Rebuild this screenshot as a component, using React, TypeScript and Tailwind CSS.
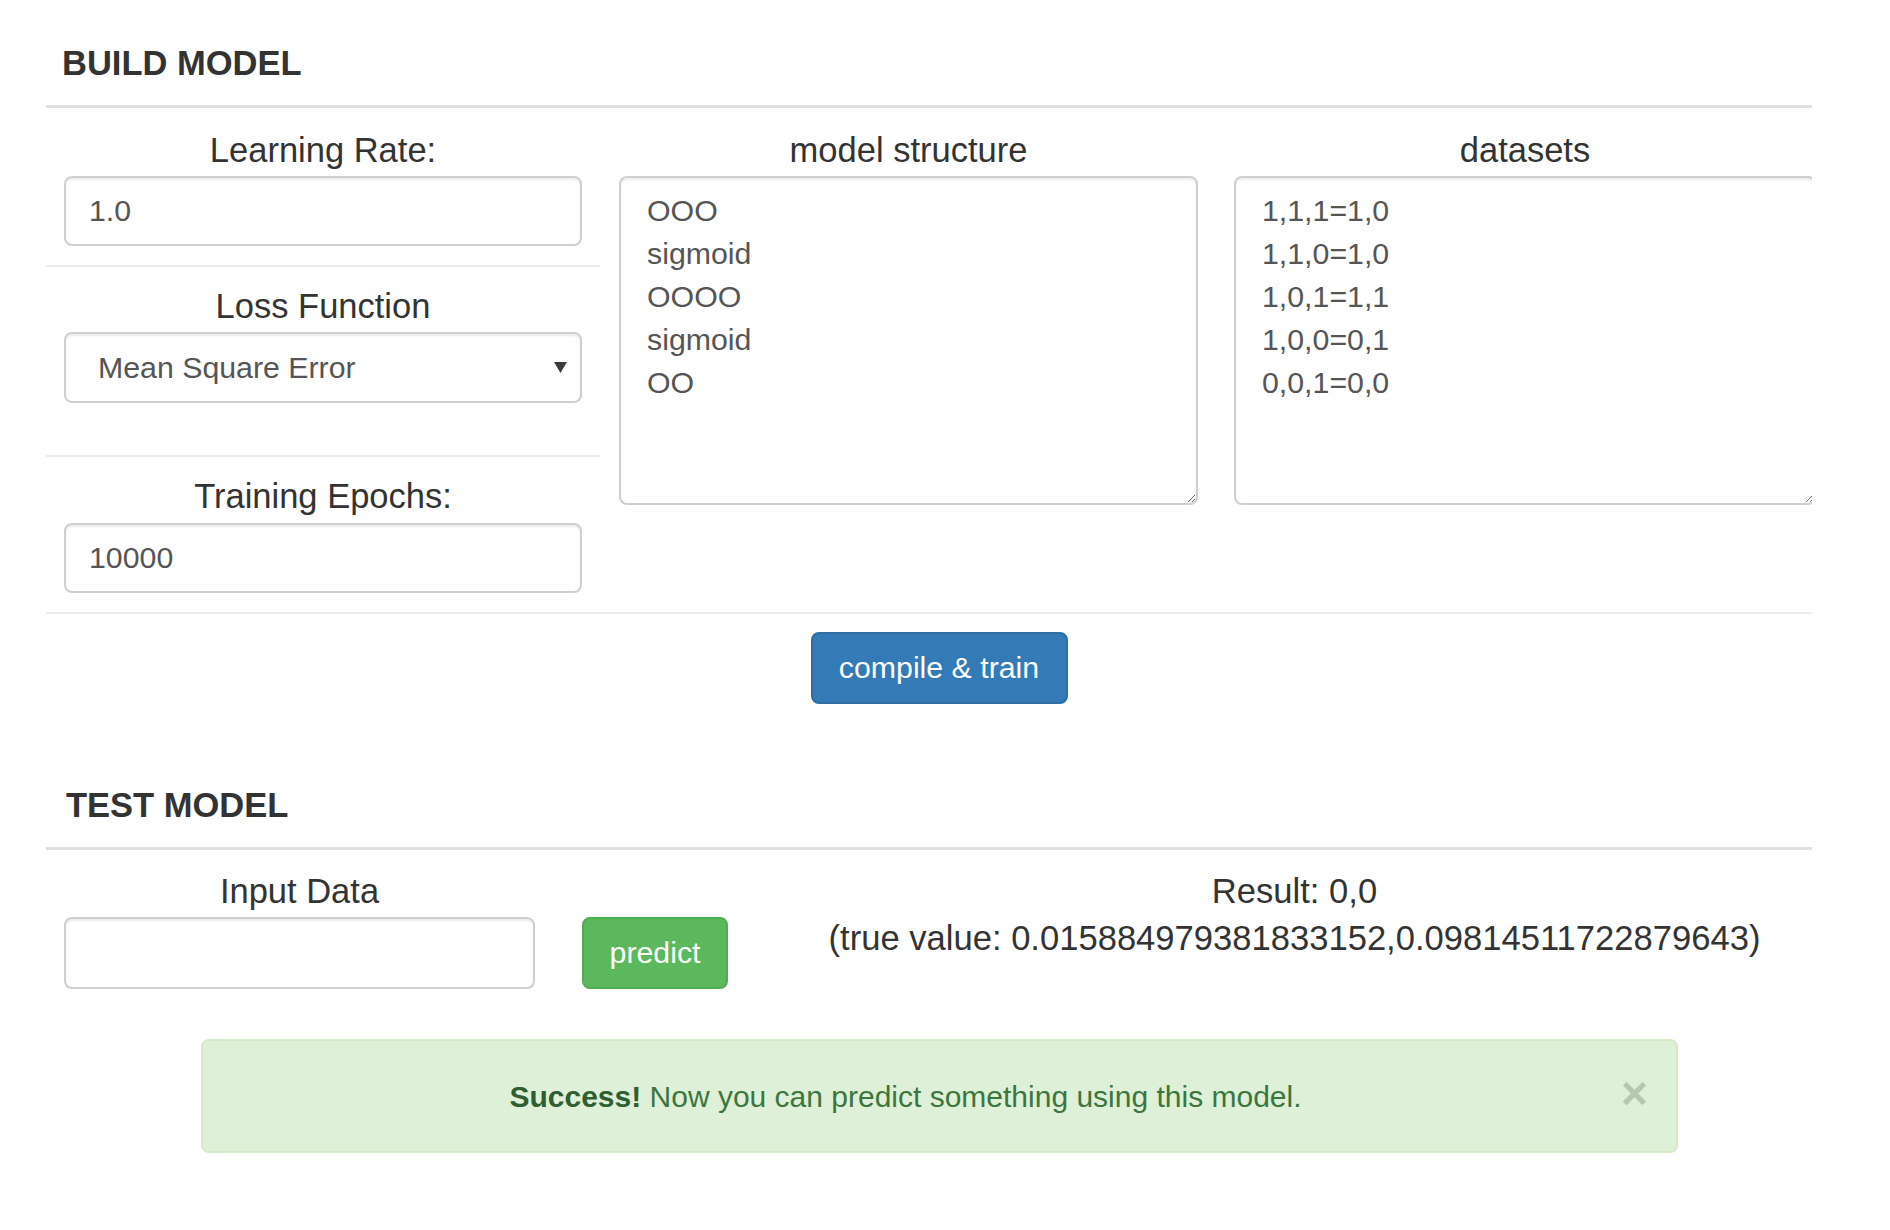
import React from "react";

function Label({ children }: { children: React.ReactNode }) {
  return (
    <div className="text-center text-[34.5px] leading-[38px] text-[#333]">{children}</div>
  );
}

const inputCls =
  "block w-full rounded-[8px] border-2 border-[#cfcfcf] bg-white pl-[23px] text-[30.3px] text-[#555] shadow-[inset_0_2px_2px_rgba(0,0,0,0.075)] outline-none font-['Liberation_Sans',Arial,sans-serif]";

const areaCls =
  "block w-full h-[329px] rounded-[8px] border-2 border-[#cfcfcf] bg-white pl-[26px] pr-[10px] pt-[11px] text-[30.3px] leading-[43px] text-[#555] shadow-[inset_0_2px_2px_rgba(0,0,0,0.075)] outline-none font-['Liberation_Sans',Arial,sans-serif]";

export default function App() {
  return (
    <div className="w-[1812px] min-h-[1230px] overflow-hidden bg-white font-['Liberation_Sans',Arial,sans-serif] text-[#333]">
      <div className="ml-[46px] w-[1786px]">
        {/* BUILD MODEL */}
        <h2 className="pt-[44px] pl-[16px] text-[34.5px] leading-[38px] font-bold text-[#333]">
          BUILD MODEL
        </h2>
        <div className="mt-[23px] h-[3px] bg-[#e0e0e0]" />

        <div className="flex">
          {/* left column */}
          <div className="w-[554px] shrink-0">
            <div className="px-[18px] pt-[23px]">
              <Label>Learning Rate:</Label>
              <input readOnly defaultValue="1.0" className={inputCls + " mt-[7px] h-[70px]"} />
            </div>
            <div className="mt-[19px] h-[2px] bg-[#ececec]" />
            <div className="px-[18px] pt-[20px]">
              <Label>Loss Function</Label>
              <div className="mt-[7px] flex h-[71px] items-center justify-between rounded-[8px] border-2 border-[#cfcfcf] bg-white pl-[32px] pr-[13px] shadow-[inset_0_2px_2px_rgba(0,0,0,0.075)]">
                <span className="text-[30.3px] text-[#555]">Mean Square Error</span>
                <svg width="13" height="11" viewBox="0 0 13 11">
                  <polygon points="0,0 13,0 6.5,11" fill="#3a3a3a" />
                </svg>
              </div>
            </div>
            <div className="mt-[52px] h-[2px] bg-[#ececec]" />
            <div className="px-[18px] pt-[20px]">
              <Label>Training Epochs:</Label>
              <input readOnly defaultValue="10000" className={inputCls + " mt-[8px] h-[70px]"} />
            </div>
          </div>

          {/* middle column */}
          <div className="w-[616px] shrink-0 pl-[19px] pr-[18px] pt-[23px]">
            <Label>model structure</Label>
            <textarea
              readOnly
              defaultValue={"OOO\nsigmoid\nOOOO\nsigmoid\nOO"}
              className={areaCls + " mt-[7px]"}
            />
          </div>

          {/* right column (cropped at the page edge) */}
          <div className="w-[616px] shrink-0 pl-[18px] pr-[16px] pt-[23px]">
            <Label>datasets</Label>
            <textarea
              readOnly
              defaultValue={"1,1,1=1,0\n1,1,0=1,0\n1,0,1=1,1\n1,0,0=0,1\n0,0,1=0,0"}
              className={areaCls + " mt-[7px]"}
            />
          </div>
        </div>

        <div className="mt-[19px] h-[2px] bg-[#ececec]" />

        <div className="mt-[18px] flex justify-center">
          <button className="h-[72px] w-[257px] rounded-[8px] border-2 border-[#2e6da4] bg-[#337ab7] text-[30.3px] text-white">
            compile &amp; train
          </button>
        </div>

        {/* TEST MODEL */}
        <h2 className="mt-[82px] pl-[20px] text-[34.5px] leading-[38px] font-bold text-[#333]">
          TEST MODEL
        </h2>
        <div className="mt-[23px] h-[3px] bg-[#e0e0e0]" />

        <div className="flex">
          <div className="w-[507px] shrink-0 px-[18px] pt-[22px]">
            <Label>Input Data</Label>
            <input readOnly defaultValue="" className={inputCls + " mt-[7px] h-[72px]"} />
          </div>
          <div className="w-[204px] shrink-0 pl-[29px] pt-[67px]">
            <button className="h-[72px] w-[146px] rounded-[8px] border-2 border-[#4cae4c] bg-[#5cb85c] text-[30.3px] text-white">
              predict
            </button>
          </div>
          <div className="flex-1 pt-[18px] text-center text-[34.6px] leading-[47px] text-[#333]">
            <div>Result: 0,0</div>
            <div>(true value: 0.015884979381833152,0.09814511722879643)</div>
          </div>
        </div>

        <div className="mx-auto mt-[50px] flex h-[114px] w-[1477px] items-center rounded-[8px] border-2 border-[#d6e9c6] bg-[#dff0d8] pl-[30px] pr-[30px]">
          <div className="mr-[45px] flex-1 text-center text-[30px] text-[#3c763d]">
            <strong className="font-bold text-[#2f5e30]">Success!</strong> Now you can predict something using this model.
          </div>
          <span className="-mt-[6px] flex w-[22px] justify-center text-[46px] font-bold leading-none text-[#b5c7ae]">
            ×
          </span>
        </div>
      </div>
    </div>
  );
}
